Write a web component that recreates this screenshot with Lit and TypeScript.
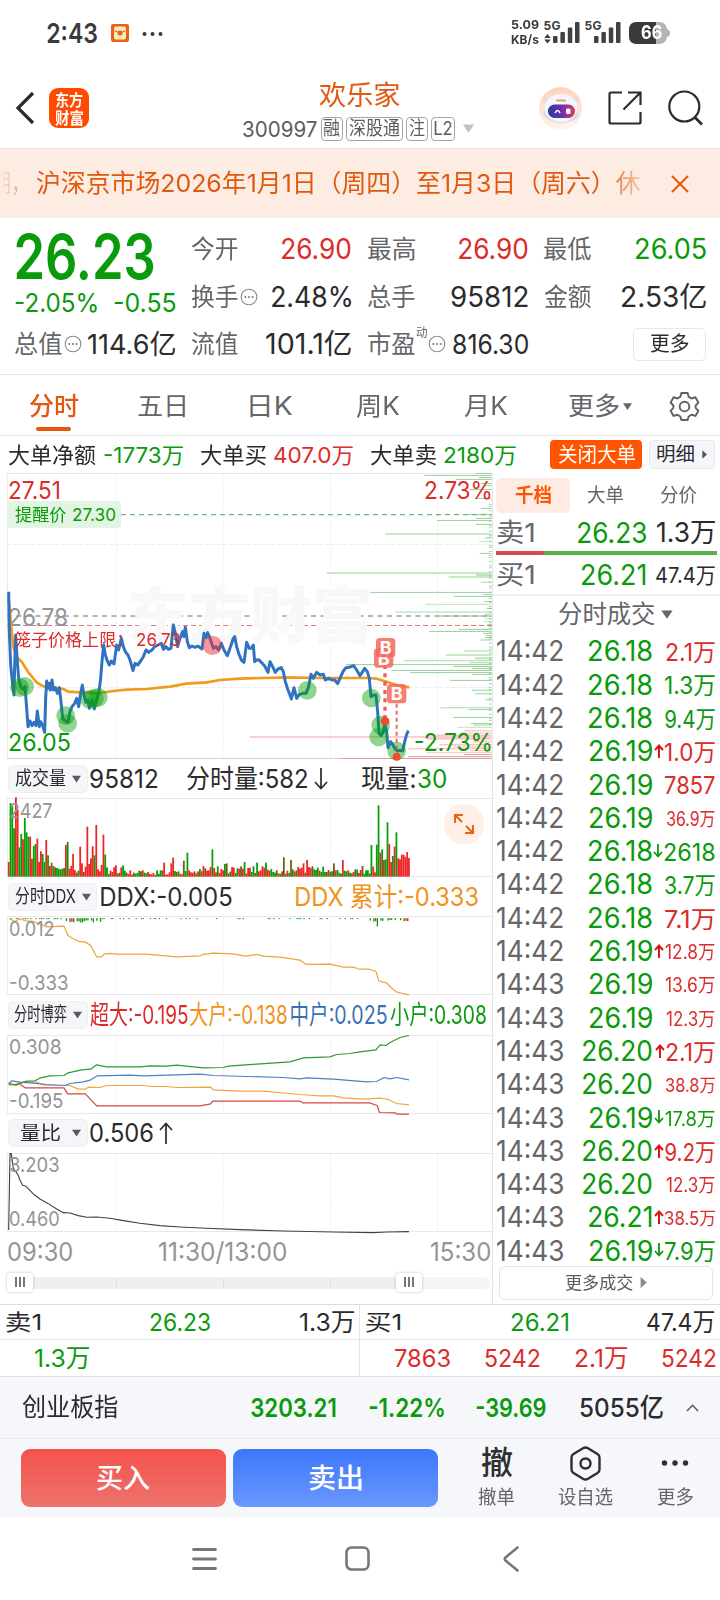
import { LitElement, html, svg, css, nothing } from "lit";
import { customElement, property } from "lit/decorators.js";

const FONT = css`"Inter", "Noto Sans CJK SC", sans-serif`;

/** A label whose glyphs are condensed or widened to span exactly `w` pixels. */
@customElement("fit-text")
class FitText extends LitElement {
  @property({ type: Number }) w = 0;
  @property() text = "";
  static styles = css`
    :host { display: block; flex: none; height: 1em; line-height: 1em; white-space: pre; }
    .t { display: inline-block; height: 1em; line-height: 1em; transform-origin: 0 50%; }
  `;
  render() {
    return html`<span class="t">${this.text}</span>`;
  }
  updated() {
    const el = this.renderRoot.querySelector(".t") as HTMLElement;
    const cs = getComputedStyle(el);
    const ctx = document.createElement("canvas").getContext("2d")!;
    ctx.font = `${cs.fontWeight} ${cs.fontSize} ${cs.fontFamily}`;
    const m = ctx.measureText(this.text);
    const ink = m.actualBoundingBoxLeft + m.actualBoundingBoxRight;
    const k = ink > 0 ? this.w / ink : 1;
    this.style.width = `${this.w}px`;
    el.style.transform = `translateX(${m.actualBoundingBoxLeft * k}px) scaleX(${k})`;
  }
}

const t = (text: string, w: number, cls = "") =>
  html`<fit-text class=${cls} .w=${w} .text=${text} style="width:${w}px"></fit-text>`;

const dots = html`<svg class="hint" viewBox="0 0 18 18"><circle cx="9" cy="9" r="7.8" fill="none" stroke="#8a8a8a" stroke-width="1.1"/><circle cx="5.4" cy="9" r="1" fill="#777"/><circle cx="9" cy="9" r="1" fill="#777"/><circle cx="12.6" cy="9" r="1" fill="#777"/></svg>`;
const down = html`<svg class="down" viewBox="0 0 10 8"><path d="M0 .5H10L5 7.8Z" fill="currentColor"/></svg>`;
const right = html`<svg class="right" viewBox="0 0 6 10"><path d="M.4 0V10L6 5Z" fill="currentColor"/></svg>`;

/* Coordinates in the plots below are in thirds of a pixel. */
const PRICE =
  "26,380 28,500 32,600 38,660 42,690 44,600 47,510 52,590 56,640 62,665 68,672 75,665 80,730 84,785 90,768 96,782 102,772 108,782 112,738 118,785 122,770 128,782 134,802 137,700 140,648 144,670 148,655 151,675 156,645 160,675 166,668 172,685 178,668 184,720 188,760 196,768 204,772 210,740 216,725 224,715 230,700 236,725 241,690 247,660 252,690 258,712 264,705 268,730 277,705 283,732 290,705 297,680 302,640 306,590 311,540 316,570 322,588 328,600 334,588 342,597 350,540 356,555 364,520 370,545 376,560 384,570 390,585 399,617 405,595 413,600 422,588 430,575 438,555 446,562 456,555 464,545 474,540 484,535 490,553 498,545 505,553 513,550 520,480 526,505 533,545 540,520 548,500 552,515 556,487 562,530 568,548 576,543 585,547 594,543 600,548 606,552 612,505 618,518 623,503 630,520 640,550 648,545 656,555 664,535 672,555 682,572 690,550 700,520 704,515 710,545 716,565 724,585 732,592 740,532 748,550 754,550 760,540 764,590 770,585 776,584 784,592 794,603 804,622 810,590 818,605 826,622 834,612 844,608 850,620 856,650 864,675 870,690 874,702 882,668 890,700 898,688 910,685 918,685 926,665 933,628 940,640 950,622 960,630 970,628 976,645 986,640 996,645 1004,645 1013,656 1022,635 1030,618 1038,608 1050,606 1061,602 1070,615 1080,632 1088,620 1094,610 1102,620 1108,640 1113,695 1122,690 1128,690 1133,740 1137,805 1144,812 1150,800 1154,775 1160,800 1164,848 1172,830 1178,838 1184,850 1192,858 1200,856 1208,858 1214,830 1220,808 1225,797";
const AVG =
  "26,400 32,470 40,545 50,575 66,592 85,622 110,652 130,664 160,668 190,672 205,680 240,682 300,684 340,678 380,674 440,672 510,665 560,656 620,652 660,645 720,641 860,637 960,639 1100,639 1130,641 1160,650 1190,660 1228,667";

const ASK: number[][] = [
  [25, 708], [31, 553], [38, 716], [43, 647], [55, 722], [62, 735], [74, 690], [100, 710], [130, 723], [148, 672],
  [160, 708], [166, 591], [178, 708], [207, 435, 5], [218, 735, 5], [230, 717, 3], [265, 719], [324, 261, 5],
  [330, 708, 6], [336, 626, 5], [352, 723, 4], [382, 390], [388, 730], [394, 642], [410, 733], [418, 555, 3], [430, 740],
  [441, 466, 4], [453, 592, 6], [448, 735, 4], [462, 733, 3], [470, 733, 3], [478, 742], [493, 657], [499, 567], [506, 730], [512, 738], [518, 735],
  [525, 722], [558, 673, 4], [570, 618, 5], [580, 705, 6], [587, 491, 4], [593, 688, 4], [599, 318], [604, 640],
  [610, 695], [616, 454], [623, 510], [628, 695], [646, 631], [676, 696, 5], [686, 705, 5], [704, 735, 5],
  [728, 601, 4], [734, 686], [757, 639], [775, 692], [780, 700], [787, 652, 3],
];
const BID: number[][] = [
  [797, 672, 4], [804, 660, 4], [811, 560, 5], [816, 29, 5], [821, 560, 6], [830, 700, 5], [839, 598, 5], [846, 640, 4],
  [851, 505, 4], [857, 690, 4], [863, 560, 3], [869, 672], [875, 505], [880, 302],
];
const rightBars = (list: number[][], thin: string, thick: string) =>
  list.map(([y, x, h]) => svg`<rect x=${x} y=${y - (h ?? 2.4) / 2} width=${755 - x} height=${h ?? 2.4} fill=${h ? thick : thin}/>`);
const ticks = Array.from({ length: 110 }, (_, i) => 118 + i * 6.1).filter((_, i) => (i * 7) % 5 < 3);

const HEAD =
  "r44 g221 g212 g145 r238 r200 g88 g128 r112 g176 g133 g120 r120 r54 g92 g98 r114 r44 r76 g68 g44 r110 g64 r32 r42 g32 g28 g26 g24 g22 g24 g26 r95 g104 r24 r32 r68 r20 g12 g18 r90 r40 g14 r30 r150 r38 r55 r91 g64 r155 r22 r16 r35 r126 g66 g28 g8 r18 r14 r28 r34 g10 g12 r28 g34 g18 g12".split(" ");
const PEAKS: Record<number, string> = {
  87: "r42", 91: "r40", 92: "r57", 98: "g48", 100: "g72", 109: "r32", 114: "g82", 121: "g38", 122: "g40", 132: "g44", 139: "g42", 144: "g42",
  154: "g58", 158: "g50", 165: "r40", 167: "r50", 176: "g30", 182: "g40", 187: "r50", 198: "g32", 203: "g95", 204: "r30", 206: "g96", 207: "g214",
  208: "r72", 209: "g82", 210: "r50", 211: "g52", 212: "g163", 213: "r98", 214: "r44", 215: "g62", 216: "r90", 217: "g133",
  218: "r55", 219: "r52", 220: "r66", 221: "r66", 222: "r60", 223: "r74", 224: "r56",
};
const volume = Array.from({ length: 225 }, (_, i) => {
  if (PEAKS[i]) return PEAKS[i];
  if (HEAD[i]) return HEAD[i];
  const n = (i * 37 + ((i * i) % 23) * 5) % 29;
  return (n % 2 ? "r" : "g") + Math.round((i > 105 ? 9 : 5) + n * (i > 105 && i < 175 ? 0.8 : 0.5));
});
const volumeBars = volume.map((b, i) => {
  const h = Number(b.slice(1));
  return svg`<rect x=${23.5 + i * 5.36} y=${365 - h} width="5.4" height=${h} fill=${b[0] === "r" ? "#ee2626" : i % 4 === 2 && h < 60 ? "#7a5a10" : "#08a008"}/>`;
});
const ddxBars = Array.from({ length: 224 }, (_, i) => {
  const x = 26 + i * 5.36;
  const n = (i * 31 + ((i * i) % 17)) % 11;
  if (n < 4 || (x > 320 && x < 1100 && n < 8)) return nothing;
  const h = x > 190 && x < 300 ? 3 + n : x > 1130 && x < 1140 ? 25 : x > 1100 ? 1 + n * 0.9 : 3;
  return svg`<rect x=${x} y="490" width="4" height=${h} fill=${n === 9 ? "#e02020" : "#149914"}/>`;
});

const grid = (h: number) => svg`
  <g stroke="#e9e9ec" stroke-width="1" fill="none">
    <path d="M7 .5H492M7 ${h - 0.5}H492M7.3 0V${h}"/>
    <path d="M116.2 1V${h}M223.3 1V${h}M330.5 1V${h}M437.6 1V${h}" stroke-dasharray="3 1.6" stroke="#f0f0f2"/>
  </g>`;
const line = (points: string, color: string, w = 3.6) =>
  svg`<polyline points=${points} fill="none" stroke=${color} stroke-width=${w} stroke-linejoin="round"/>`;

const TICKS: [string, string, string, number, string][] = [
  ["14:42", "26.18", "2.1万", 49, "r"], ["14:42", "26.18", "1.3万", 50, "g"], ["14:42", "26.18", "9.4万", 50, "g"],
  ["14:42", "26.19", "1.0万", 50, "r u"], ["14:42", "26.19", "7857", 50, "r"], ["14:42", "26.19", "36.9万", 48, "r s"],
  ["14:42", "26.18", "2618", 51, "g d"], ["14:42", "26.18", "3.7万", 50, "g"], ["14:42", "26.18", "7.1万", 50, "r"],
  ["14:42", "26.19", "12.8万", 50, "r s u"], ["14:43", "26.19", "13.6万", 50, "r s"], ["14:43", "26.19", "12.3万", 49, "r s"],
  ["14:43", "26.20", "2.1万", 49, "r u"], ["14:43", "26.20", "38.8万", 49, "r xs"], ["14:43", "26.19", "17.8万", 50, "g s d"],
  ["14:43", "26.20", "9.2万", 50, "r u"], ["14:43", "26.20", "12.3万", 49, "r s"], ["14:43", "26.21", "38.5万", 50, "r xs u"],
  ["14:43", "26.19", "7.9万", 50, "g d"],
];
const priceWidth: Record<string, number> = { "26.18": 62.5, "26.19": 62, "26.20": 69, "26.21": 63 };

@customElement("app-root")
class AppRoot extends LitElement {
  static styles = css`
    :host { display: block; width: 720px; height: 1600px; overflow: hidden; background: #fff; color: #2b2b2e; font-family: ${FONT}; }
    * { box-sizing: border-box; }
    svg { display: block; flex: none; }
    .r { color: #db2c2c; } .g { color: #0a9a0c; } .o { color: #f0921c; } .b { color: #3b6fb6; } .grey { color: #66666a; } .lite { color: #949497; }
    .row { display: flex; align-items: center; }
    .f12 { font-size: 12px; } .f17 { font-size: 17.5px; } .f19 { font-size: 19px; } .f20 { font-size: 20.5px; } .f22 { font-size: 22px; }
    .f24 { font-size: 24.5px; } .f26 { font-size: 26px; } .f27 { font-size: 27.5px; } .f28 { font-size: 28.5px; }
    .semi { font-weight: 600; } .med { font-weight: 500; }
    .end { margin-left: auto; }

    .status { height: 66px; align-items: flex-start; padding: 20px 50px 0 47px; color: #3a3a3c; }
    .clock { font-size: 27px; font-weight: 600; }
    .packet { margin: 4px 0 0 14px; }
    .more { margin: 11px 0 0 13px; }
    .speed { margin: -1px 0 0 auto; display: grid; gap: 3px; font-size: 12.3px; font-weight: 700; }
    .signal { margin: 1px 0 0 3px; overflow: visible; }
    .batt { margin-top: 1px; position: relative; color: #fff; }
    .batt .lvl { position: absolute; left: 12px; top: 2px; font-size: 19px; font-weight: 700; }

    .head { height: 83px; display: grid; grid-template-columns: 243px 296px 1fr; border-bottom: 1px solid #e4e5e8; }
    .brand { padding: 2px 0 0 15px; gap: 14px; }
    .logo { width: 40px; height: 40px; border-radius: 9px; background: #ff4a00; color: #fff; display: grid; place-content: center; gap: 2px; font-size: 16px; font-weight: 600; font-family: "Noto Sans CJK SC", sans-serif; }
    .title { color: #e4570f; margin: 15.500px 0 7.500px 76px; font-size: 27.5px; }
    .code { color: #5c5c60; gap: 4px; font-size: 22px; height: 24px; }
    .tag { border: 1px solid #a5a5a8; border-radius: 4px; height: 24px; padding: 0 2px; font-size: 19px; display: flex; align-items: center; }
    .tag + .tag { margin-left: -1px; }
    .code .down { width: 13px; height: 9px; color: #c3c3c6; margin-left: 3px; }
    .tools { padding-top: 2px; gap: 26px; }

    .banner { height: 69px; background: #fcece2; color: #e0590f; font-size: 24.5px; }
    .marquee { width: 648px; height: 69px; gap: 9px; overflow: hidden; -webkit-mask: linear-gradient(90deg, transparent, #000 40px, #000 600px, transparent 655px); mask: linear-gradient(90deg, transparent, #000 40px, #000 600px, transparent 655px); }
    .marquee .lead { margin-left: -8px; }
    .close { margin-left: 23px; }

    .quote { height: 157px; padding: 7.500px 14px 0 15px; display: grid; align-content: start; grid-template-columns: 176px 177px 176px 162px; border-bottom: 1px solid #e4e5e8; }
    .cell { height: 47.5px; padding-right: 16px; }
    .cell:nth-child(4n + 2) { padding-right: 17px; }
    .cell:nth-child(4n) { padding-right: 0; }
    .cell > :last-child:not(:first-child) { margin-left: auto; }
    .hint { width: 18px; height: 18px; margin-left: 2px; }
    .big { font-size: 61.5px; font-weight: 600; padding: 0 0 0 1px; align-items: flex-start; }
    .big > * { margin-top: 0; }
    .chg { padding: 13px 15px 0 0; }
    .sup { align-self: flex-start; margin: 6px -1px 0 1px; font-size: 12.5px; }
    .btn { width: 73px; height: 33px; border: 1px solid #e6e7ea; border-radius: 5px; display: grid; place-content: center; }

    .tabs { height: 61px; display: grid; grid-template-columns: 109px 112px 106px 108px 105px 100px 1fr; padding-left: 29px; color: #66666a; border-bottom: 1px solid #e4e5e8; font-size: 25px; }
    .tabs > * { height: 61px; display: flex; align-items: center; gap: 4px; padding-top: 1px; }
    .tabs .on { color: #e4570f; font-weight: 500; position: relative; }
    .tabs .on::after { content: ""; position: absolute; left: 7px; top: 51.5px; width: 35px; height: 4px; border-radius: 2px; background: #e4570f; }
    .tabs .down { width: 9px; height: 9px; }

    .sum { height: 37px; padding: 0 5px 0 8px; }
    .sum > .gap { margin-right: 17px; }
    .sum > .near { margin-right: 8px; }
    .chip { height: 29px; border-radius: 4px; display: flex; align-items: center; justify-content: center; gap: 8px; background: #ff5500; color: #fff; width: 92px; font-size: 20px; }
    .chip.plain { background: #f4f6fa; border: 1px solid #e6e8ec; color: #2b2b2e; width: 66px; margin-left: 7px; font-size: 19px; }
    .chip .right { width: 5px; height: 9px; color: #555; }

    .main { display: grid; grid-template-columns: 493px 227px; height: 832px; border-bottom: 1px solid #dcdde0; }
    .charts { border-right: 1px solid #e4e5e8; }
    .plot { position: relative; width: 492px; }
    .plot svg { width: 492px; overflow: visible; }
    .lab { position: absolute; left: 9px; }
    .p1 .hi { top: 5px; } .p1 .mid { top: 131.5px; } .p1 .lo { top: 257px; }
    .p1 .pct { left: 425px; } .p1 .pct.lo { left: 415px; }
    .remind { position: absolute; left: 7px; top: 28px; width: 114px; height: 27px; border-radius: 0 4px 4px 0; background: #e2f5e3; padding-left: 8px; gap: 7px; }
    .cage { position: absolute; left: 14px; top: 158px; gap: 15px; }
    .wm { position: absolute; left: 130px; top: 113px; font-size: 61px; font-weight: 900; color: #f8f8f9; }
    .price { position: absolute; left: 0; top: 0; }
    .sub .lab { left: 10px; } .sub .hi { top: 2.500px; } .sub .lo { top: 56.500px; }
    .bar { height: 39.25px; padding: 0 5px 0 8px; }
    .bar.first { height: 39px; }
    .pill { height: 28px; width: 80px; border-radius: 5px; background: #f5f6f9; border: 1px solid #eeeff2; display: flex; align-items: center; justify-content: center; gap: 6px; color: #2b2b2e; margin-right: 2px; }
    .pill.wide { width: 89px; margin-right: 4px; }
    .pill .down { width: 9px; height: 8px; color: #5a5a5c; }
    .pill.loose { gap: 12px; padding-left: 5px; }
    .expand { position: absolute; left: 444px; top: 6px; width: 40px; height: 40px; border-radius: 50%; background: #feefe7; display: grid; place-content: center; }
    .plot .expand svg { width: 20px; }
    .times { height: 40px; padding: 0 2px 0 8px; color: #949497; }
    .times .noon { margin-left: 87px; }
    .slider { position: relative; margin: 5px 2px 0 7px; height: 12px; border-radius: 6px; background: #f5f5f8; }
    .slider::before { content: ""; position: absolute; left: 0; top: 0; width: 402px; height: 12px; background: linear-gradient(#dcdcdf, #dcdcdf) 109px 2px / 1px 8px no-repeat, linear-gradient(#dcdcdf, #dcdcdf) 216px 2px / 1px 8px no-repeat, linear-gradient(#dcdcdf, #dcdcdf) 323px 2px / 1px 8px no-repeat, #efeff2; }
    .knob { position: absolute; top: -4px; left: 0; width: 26px; height: 19px; border-radius: 4px; background: #fff; box-shadow: 0 0 3px rgba(0, 0, 0, .25); display: flex; gap: 2.6px; align-items: center; justify-content: center; }
    .knob.right { left: 389px; }
    .knob i { width: 1.8px; height: 10px; background: #77777a; }

    .book { padding-left: 3px; }
    .segs { height: 40px; padding: 4px 0 0 0; }
    .segs .sel { width: 74px; height: 35px; background: #feece4; border-radius: 5px; color: #ff5500; display: grid; place-content: center; margin-right: 17px; font-weight: 700; }
    .segs .nx { margin-right: 36px; }
    .lvl1 { height: 38px; padding: 2px 5px 0 1px; }
    .lvl1 > :nth-child(2) { margin-left: auto; }
    .lvl1 .q { width: 69px; display: flex; justify-content: flex-end; }
    .ratio { width: 221px; height: 4px; background: linear-gradient(115deg, #d8494b 44px, #5cb04c 44.5px); }
    .lvl1.buy { height: 39px; padding-top: 1px; }
    .dealhd { margin-left: -3px; border-top: 2px solid #eeeff1; height: 41px; padding: 0 0 3px 66px; gap: 6px; }
    .dealhd .down { width: 12px; height: 9px; }
    .deal { height: 33.3px; padding: 0 5px 0 1px; display: grid; grid-template-columns: 66px 88.5px 64.5px; align-items: center; font-size: 28.5px; }
    .deal > :nth-child(2) { justify-self: end; }
    .vol { display: flex; align-items: center; justify-content: flex-end; gap: 1px; padding-top: 3px; font-size: 24px; padding-right: 1px; }
    .vol.s { font-size: 19.5px; } .vol.xs { font-size: 18px; }
    .vol .arr { width: 10px; height: 14px; margin-top: -4px; }
    .morebtn { width: 214px; height: 34px; margin: -2px 0 0 3px; border: 1px solid #e3e4e7; border-radius: 6px; display: flex; align-items: center; justify-content: center; gap: 7px; color: #5c5c60; }
    .morebtn .right { width: 7px; height: 11px; color: #8a8a8c; }

    .depth { display: grid; grid-template-columns: 360px 360px; height: 72px; border-bottom: 1px solid #dfe0e3; }
    .depth > div:first-child { border-right: 1px solid #e4e5e8; }
    .d1 { height: 35px; border-bottom: 1px solid #e8e9ec; padding: 0 6px; justify-content: space-between; }
    .d1.sell { padding: 0 5px 0 6px; }
    .d1.sell > :nth-child(2) { margin-left: 20px; }
    .d1.buy2 > :nth-child(2) { margin-left: 31px; }
    .d2 { height: 36px; padding: 0 4px 0 35px; justify-content: space-between; }
    .index { height: 62px; background: #f6f7fa; border-bottom: 1px solid #e9eaed; padding: 0 21px 0 22px; }
    .index .i1 { margin-left: 133px; } .index .i2 { margin-left: 33px; } .index .i3 { margin-left: 32px; } .index .i4 { margin-left: 34px; } .index .i5 { margin-left: auto; }
    .acts { height: 78px; background: #f6f7fa; padding: 0 21px; }
    .trade { width: 205px; height: 58px; border-radius: 9px; display: grid; place-content: center; color: #fff; font-size: 27px; font-weight: 500; background: linear-gradient(#f4524c, #ee726c); margin-right: 7px; }
    .trade.sell { width: 205px; background: linear-gradient(#3d77fb, #6a97ff); margin-right: 40px; }
    .act { display: flex; flex-direction: column; align-items: center; height: 64px; margin-bottom: 6px; justify-content: space-between; font-size: 19px; color: #66666a; }
    .act .ic { height: 40px; display: grid; place-content: center; color: #2f2f32; }
    .act .che { font-size: 32px; font-weight: 500; }
    .act.m { margin-left: 43px; } .act.l { margin-left: auto; margin-right: 6px; }
    .nav { height: 83px; }
    .nav .n1 { margin-left: 192px; } .nav .n2 { margin-left: 128px; } .nav .n3 { margin-left: 133px; }
  `;

  statusBar() {
    const bars = (x: number) => svg`<g fill="#414143"><rect x=${x} y="15" width="4.5" height="7" rx="1"/><rect x=${x + 7.4} y="11" width="4.5" height="11" rx="1"/><rect x=${x + 14.8} y="6.5" width="4.5" height="15.500" rx="1"/><rect x=${x + 22} y="1" width="4.5" height="21" rx="1"/></g>`;
    return html`<div class="row status">
      ${t("2:43", 50, "clock")}
      <svg class="packet" width="18" height="18" viewBox="0 0 18 18"><rect width="18" height="18" rx="2" fill="#e8601c"/><rect x="3" y="2.500" width="12" height="13" rx="2" fill="#ffe9b8"/><path d="M3.500 7Q9 10 14.500 7" stroke="#e8601c" fill="none"/><circle cx="9" cy="9" r="2.500" fill="#e8601c"/></svg>
      <svg class="more" width="21" height="6" viewBox="0 0 21 6" fill="#3a3a3c"><circle cx="2.500" cy="3" r="2"/><circle cx="10.500" cy="3" r="2"/><circle cx="18.500" cy="3" r="2"/></svg>
      <div class="speed">${t("5.09", 28)}${t("KB/s", 28)}</div>
      <svg class="signal" width="87" height="24" viewBox="0 0 87 24">
        <text x="1.500" y="8.800" font-size="12" font-weight="700" textLength="17" fill="#3a3a3c">5G</text>
        <text x="42.500" y="8.800" font-size="12" font-weight="700" textLength="17" fill="#3a3a3c">5G</text>
        <path d="M5.500 13L8.800 17H2.200ZM5.500 22.500L8.800 18.500H2.200Z" fill="#414143"/>${bars(11)}${bars(52)}</svg>
      <div class="batt"><svg width="41" height="24" viewBox="0 0 41 24"><path d="M8 1H30Q37 1 38 8Q41 9 41 12Q41 15 38 16Q37 23 30 23H8Q0 23 0 15V9Q0 1 8 1Z" fill="#b4b4b4"/><path d="M8 1H27V23H8Q0 23 0 15V9Q0 1 8 1Z" fill="#3a3a3c"/></svg>${t("66", 21, "lvl")}</div>
    </div>`;
  }

  header() {
    return html`<div class="head">
      <div class="row brand">
        <svg width="20" height="34" viewBox="0 0 20 34"><path d="M18 2L3 17L18 32" fill="none" stroke="#2b2b2e" stroke-width="3.200"/></svg>
        <div class="logo">${t("东方", 28)}${t("财富", 28)}</div>
      </div>
      <div>
        ${t("欢乐家", 81, "title")}
        <div class="row code">${t("300997", 74)}
          <span class="tag">${t("融", 16)}</span><span class="tag">${t("深股通", 51)}</span><span class="tag">${t("注", 16)}</span><span class="tag">${t("L2", 18)}</span>${down}</div>
      </div>
      <div class="row tools">
        <svg width="43" height="43" viewBox="0 0 43 43"><defs><linearGradient id="halo" x2="0" y2="1"><stop stop-color="#ffd2b8"/><stop offset="1" stop-color="#fff5ef"/></linearGradient><linearGradient id="visor"><stop stop-color="#2f3a9a"/><stop offset=".5" stop-color="#6a2fb0"/><stop offset="1" stop-color="#e0405a"/></linearGradient></defs>
          <circle cx="21.500" cy="21.500" r="21.500" fill="url(#halo)"/><path d="M5 9L12 13L32 13L38 9L38 20L40 28L37 32Q22 40 8 32L4 28L6 20Z" fill="#d9dde8"/><ellipse cx="22" cy="21" rx="16.500" ry="14" fill="#f5f6fb"/><rect x="17" y="12.500" width="10" height="2" rx="1" fill="#e0a070"/><rect x="9" y="17.500" width="27" height="13.500" rx="6.500" fill="url(#visor)"/><path d="M16 26Q18.500 21 21 26" stroke="#fff" stroke-width="1.600" fill="none"/><rect x="27" y="21.500" width="4.500" height="5.500" rx="1.500" fill="#fff"/></svg>
        <svg width="34" height="34" viewBox="0 0 34 34"><path d="M14 1.500H3Q1.500 1.500 1.500 3V31Q1.500 32.500 3 32.500H31Q32.500 32.500 32.500 31V21M20 1.500H32.500V14M32 2L15.500 18.500" fill="none" stroke="#2b2b2e" stroke-width="2.200"/></svg>
        <svg width="35" height="36" viewBox="0 0 35 36"><circle cx="16.300" cy="16.500" r="15" fill="none" stroke="#2b2b2e" stroke-width="2.200"/><path d="M26.500 27L34 34.500" stroke="#2b2b2e" stroke-width="2.600"/></svg>
      </div>
    </div>`;
  }

  quote() {
    const L = (s: string) => t(s, 47, "grey f24");
    return html`<div class="quote">
      <div class="row cell big">${t("26.23", 138, "g")}</div>
      <div class="row cell">${L("今开")}${t("26.90", 69, "r f28")}</div>
      <div class="row cell">${L("最高")}${t("26.90", 69, "r f28")}</div>
      <div class="row cell">${L("最低")}${t("26.05", 70, "g f28")}</div>
      <div class="row cell chg">${t("-2.05%", 82, "g f26")}${t("-0.55", 62, "g f26")}</div>
      <div class="row cell">${L("换手")}${dots}${t("2.48%", 79, "f28")}</div>
      <div class="row cell">${L("总手")}${t("95812", 77, "f28")}</div>
      <div class="row cell">${L("金额")}${t("2.53亿", 84, "f28")}</div>
      <div class="row cell">${L("总值")}${dots}${t("114.6亿", 87, "f27")}</div>
      <div class="row cell">${L("流值")}${t("101.1亿", 85, "f28")}</div>
      <div class="row cell">${L("市盈")}${t("动", 11, "sup grey")}${dots}${t("816.30", 75, "f27")}</div>
      <div class="row cell"><span></span><div class="btn">${t("更多", 39, "f20")}</div></div>
    </div>`;
  }

  priceChart() {
    const badge = (x: number, y: number) => svg`<g transform="translate(${x} ${y})"><rect x="-29" y="-29" width="58" height="58" rx="11" fill="#f5685a" opacity=".85"/><text x="0" y="20" font-size="54" font-weight="700" text-anchor="middle" fill="#fff">B</text></g>`;
    return html`<div class="plot p1">
      ${t("东方财富", 240, "wm")}
      <svg height="286" viewBox="0 0 492 286">
        ${grid(286)}
        <path d="M7 71.500H492M7 214.500H492" stroke="#ececef" stroke-dasharray="4 2"/>
        <path d="M7 285.500H492" stroke="#d2d2d5"/>
        <g transform="translate(240 -8) scale(.33333)">
          ${rightBars(ASK, "#84c586", "#bce5bc")}${rightBars(BID, "#df8a8c", "#fbc6c8")}
          ${ticks.map((y) => svg`<rect x="747" y=${y} width="8" height="2.500" fill="#8cc98e"/>`)}
        </g>
        <path d="M121 41.700H492" stroke="#6fb573" stroke-width="1.200" stroke-dasharray="5 4"/>
        <path d="M7 143H492" stroke="#b4b4b6" stroke-width="1.800" stroke-dasharray="5 4.500"/>
        <path d="M7 152.500H492" stroke="#e07a7c" stroke-width="1.100" stroke-dasharray="5 3"/>
      </svg>
      ${t("26.78", 58, "lab mid lite f24")}
      <svg class="price" height="286" viewBox="0 0 492 286"><g transform="translate(0 -8) scale(.33333)">
        ${line(AVG, "#f29a1e", 8)}${line(PRICE, "#3173c0", 9)}
        <g fill="#06a006">${[[59, 668], [74, 664], [197, 752], [203, 775], [269, 703], [283, 700], [295, 697], [922, 676], [1114, 699], [1142, 780], [1136, 816], [1190, 858]].map(([x, y]) => svg`<circle cx=${x} cy=${y} r="28" opacity=".45"/>`)}</g>
        <circle cx="637" cy="541" r="29" fill="#ee3038" opacity=".5"/>
        <path d="M1155 600V760" stroke="#e8443a" stroke-width="10" stroke-dasharray="12 13" opacity=".85"/>
        <path d="M1190 716V865" stroke="#e8443a" stroke-width="6" stroke-dasharray="12 9" opacity=".8"/>
        ${badge(1151, 579)}${badge(1157, 548)}${badge(1190, 686)}
        <circle cx="1155" cy="768" r="13" fill="#f04a30"/><circle cx="1190" cy="875" r="12" fill="#f04a30"/>
      </g></svg>
      ${t("27.51", 50, "lab hi r f24")}
      ${t("2.73%", 66, "lab hi pct r f24")}
      <div class="row remind">${t("提醒价", 51, "g f17")}${t("27.30", 42, "g f17")}</div>
      <div class="row cage">${t("笼子价格上限：", 108, "r f17")}${t("26.73", 43, "r f17")}</div>
      ${t("26.05", 61, "lab lo g f24")}
      ${t("-2.73%", 76, "lab lo pct g f24")}
    </div>`;
  }

  sub(hi: unknown, lo: unknown, body: unknown, y0: number, extra: unknown = nothing) {
    return html`<div class="plot sub"><svg height="79" viewBox="0 0 492 79">${grid(79)}<g transform="translate(0 ${-y0}) scale(.33333)">${body}</g></svg>${hi}${lo}${extra}</div>`;
  }

  render() {
    const pill = (s: string, w: number, cls = "") => html`<span class="pill ${cls}">${t(s, w, "f19")}${down}</span>`;
    const arrow = (c: string) => c.includes("u")
      ? html`<svg class="arr" viewBox="0 0 10 14"><path d="M5 14V2M1 6L5 1.500L9 6" fill="none" stroke="#dc1414" stroke-width="2"/></svg>`
      : c.includes("d") ? html`<svg class="arr" viewBox="0 0 10 14"><path d="M5 0V12M1 8L5 12.500L9 8" fill="none" stroke="#0a9a0c" stroke-width="1.800"/></svg>` : nothing;
    const thinArrow = (d: string) => html`<svg width="14" height="22" viewBox="0 0 14 22"><path d=${d} fill="none" stroke="#2b2b2e" stroke-width="1.700"/></svg>`;
    return html`
      ${this.statusBar()}
      ${this.header()}
      <div class="row banner">
        <div class="row marquee">${t("期，", 26, "lead")}<span></span>${t("沪深京市场2026年1月1日（周四）至1月3日（周六）休", 604)}${t("市", 23)}</div>
        <svg class="close" width="18" height="18" viewBox="0 0 18 18"><path d="M1 1L17 17M17 1L1 17" stroke="#e0590f" stroke-width="2"/></svg>
      </div>
      ${this.quote()}
      <div class="tabs">
        <div class="on">${t("分时", 50)}</div><div>${t("五日", 47)}</div><div>${t("日K", 43)}</div><div>${t("周K", 44)}</div><div>${t("月K", 44)}</div>
        <div>${t("更多", 50)}${down}</div>
        <div><svg width="31" height="31" viewBox="0 0 32 32" fill="none" stroke="#606064" stroke-width="2"><circle cx="16" cy="16" r="5"/><path d="M12.800 2H19.200L20.300 6L23.300 7.700L27.300 6.500L30.300 12L27.500 15V17.500L30.300 20.500L27.300 25.700L23.300 24.500L20.300 26.300L19.200 30H12.800L11.700 26.300L8.700 24.500L4.700 25.700L1.700 20.500L4.500 17.500V15L1.700 12L4.700 6.500L8.700 7.700L11.700 6Z" stroke-linejoin="round"/></svg></div>
      </div>
      <div class="row sum">
        ${t("大单净额", 88, "f22 near")}${t("-1773万", 79, "g f22 gap")}${t("大单买", 66, "f22 near")}${t("407.0万", 79, "r f22 gap")}${t("大单卖", 66, "f22 near")}${t("2180万", 72, "g f22")}
        <span class="end chip">${t("关闭大单", 77)}</span><span class="chip plain">${t("明细", 37)}${right}</span>
      </div>
      <div class="main">
        <div class="charts">
          ${this.priceChart()}
          <div class="row bar first">${pill("成交量", 51)}${t("95812", 67, "f26")}<span style="width:30px"></span>${t("分时量:582", 120, "f26")}<span style="width:7px"></span>${thinArrow("M7 0V20M1 14L7 20.500L13 14")}<span style="width:34px"></span>${t("现量:", 53, "f26")}<span style="width:3px"></span>${t("30", 28, "f26 g")}</div>
          ${this.sub(t("2427", 42, "lab hi lite f20"), nothing, volumeBars, 43, html`<div class="expand"><svg width="20" height="20" viewBox="0 0 20 20"><path d="M1 9V1H9M1 1L8 8M19 11V19H11M19 19L12 12" fill="none" stroke="#e8651c" stroke-width="2"/></svg></div>`)}
          <div class="row bar">${pill("分时DDX", 61, "wide")}${t("DDX:-0.005", 131, "f26")}<span class="end"></span>${t("DDX 累计:-0.333", 182, "f26 o")}<span style="width:9px"></span></div>
          ${this.sub(t("0.012", 44, "lab hi lite f20"), t("-0.333", 58, "lab lo lite f20"), svg`${ddxBars}${line("28,492 45,500 60,492 75,498 100,500 120,508 140,516 192,514 204,542 220,552 236,560 256,562 272,572 290,606 305,606 312,598 330,596 350,598 440,598 470,601 530,606 600,603 610,599 640,595 700,597 735,604 770,599 790,604 840,607 900,616 918,628 935,629 990,628 1030,637 1060,637 1075,642 1110,644 1128,650 1136,678 1160,685 1170,695 1190,712 1210,716 1227,720", "#eda338")}`, 161.2)}
          <div class="row bar">${pill("分时博弈", 53)}${t("超大:-0.195", 98, "f26 r")}<span style="width:2px"></span>${t("大户:-0.138", 97, "f26 o")}<span style="width:4px"></span>${t("中户:0.025", 96, "f26 b")}<span style="width:3px"></span>${t("小户:0.308", 96, "f26 g")}</div>
          ${this.sub(t("0.308", 51, "lab hi lite f20"), t("-0.195", 53, "lab lo lite f20"), svg`
            ${line("26,268 60,266 75,277 192,277 203,295 256,295 290,331 600,331 632,325 638,317 900,317 908,322 1108,322 1132,330 1138,351 1186,352 1192,356 1227,356", "#d84646")}
            ${line("26,264 50,270 75,258 110,260 130,268 180,270 210,270 235,281 256,281 265,275 300,276 320,270 430,270 460,273 500,273 530,276 632,275 640,283 720,287 790,287 900,297 960,301 1000,301 1030,307 1090,311 1140,308 1165,312 1190,324 1227,328", "#efa640")}
            ${line("26,264 36,256 60,260 90,262 140,267 195,270 210,264 250,259 270,254 292,241 390,239 430,241 600,236 640,240 740,243 850,246 900,250 920,247 1000,251 1100,259 1130,258 1152,246 1170,250 1190,246 1227,253", "#4b82c8")}
            ${line("26,264 45,268 80,257 105,256 122,247 150,241 192,240 204,232 245,223 272,221 290,208 320,214 420,214 450,211 500,212 530,209 610,217 670,216 685,212 770,206 870,199 910,187 990,184 1010,177 1050,174 1080,169 1128,163 1140,148 1158,150 1172,140 1200,126 1227,120", "#2f9a33")}`, 39.5)}
          <div class="row bar">${pill("量比", 40, "loose")}${t("0.506", 63, "f26")}<span style="width:6px"></span>${thinArrow("M7 22V2M1 8L7 1.500L13 8")}</div>
          ${this.sub(t("3.203", 49, "lab hi lite f20"), t("0.460", 49, "lab lo lite f20"), line("26,704 30,475 34,475 40,520 48,530 54,538 60,555 68,570 78,573 100,596 120,611 145,625 170,641 190,652 210,653 235,661 260,666 290,665 330,669 370,676 420,684 480,691 540,695 620,699 720,703 850,707 1000,710 1120,712 1160,710 1227,709", "#444", 3.4), 157.7)}
          <div class="row times">${t("09:30", 64, "f26")}${t("11:30/13:00", 127, "f26 noon")}${t("15:30", 59, "f26 end")}</div>
          <div class="slider"><span class="knob"><i></i><i></i><i></i></span><span class="knob right"><i></i><i></i><i></i></span></div>
        </div>
        <div class="book">
          <div class="row segs"><span class="sel">${t("千档", 37, "f19")}</span>${t("大单", 37, "f19 grey nx")}${t("分价", 37, "f19 grey")}</div>
          <div class="row lvl1">${t("卖1", 37, "f26 grey")}${t("26.23", 68, "f28 g")}<span class="q">${t("1.3万", 58, "f27")}</span></div>
          <div class="ratio"></div>
          <div class="row lvl1 buy">${t("买1", 37, "f26 grey")}${t("26.21", 64, "f28 g")}<span class="q">${t("47.4万", 59, "f22")}</span></div>
          <div class="row dealhd grey">${t("分时成交", 96, "f24")}${down}</div>
          ${TICKS.map(([time, p, v, w, c]) => html`<div class="deal">${t(time, 66, "grey")}${t(p, priceWidth[p], "g")}<span class="vol ${c}">${arrow(c)}${t(v, w)}</span></div>`)}
          <div class="morebtn">${t("更多成交", 68, "f17")}${right}</div>
        </div>
      </div>
      <div class="depth">
        <div><div class="row d1 sell">${t("卖1", 34, "f22")}${t("26.23", 60, "g f24")}${t("1.3万", 54, "f24")}</div><div class="row d2">${t("1.3万", 54, "g f24")}</div></div>
        <div><div class="row d1 buy2">${t("买1", 34, "f22")}${t("26.21", 57, "g f24")}${t("47.4万", 67, "f24")}</div><div class="row d2 r">${t("7863", 55, "f24")}${t("5242", 55, "f24")}${t("2.1万", 52, "f24")}${t("5242", 54, "f24")}</div></div>
      </div>
      <div class="row index">${t("创业板指", 96, "f24")}${t("3203.21", 85, "g f26 semi i1")}${t("-1.22%", 75, "g f26 semi i2")}${t("-39.69", 70, "g f26 semi i3")}${t("5055亿", 83, "f26 med i4")}
        <svg class="i5" width="13" height="8" viewBox="0 0 13 8"><path d="M1 7L6.500 1.200L12 7" fill="none" stroke="#555" stroke-width="1.400"/></svg></div>
      <div class="row acts">
        <div class="trade">${t("买入", 53)}</div><div class="trade sell">${t("卖出", 53)}</div>
        <div class="act"><div class="ic">${t("撤", 31, "che")}</div>${t("撤单", 37)}</div>
        <div class="act m"><div class="ic"><svg width="31" height="35" viewBox="0 0 31 35" fill="none" stroke="#2f2f32" stroke-width="2.400"><path d="M13 2.200Q15.500 .8 18 2.200L27.500 8Q29.500 9.300 29.500 11.500V23.500Q29.500 25.700 27.500 27L18 32.800Q15.500 34.200 13 32.800L3.500 27Q1.500 25.700 1.500 23.500V11.500Q1.500 9.300 3.500 8Z"/><circle cx="15.500" cy="17.500" r="5"/></svg></div>${t("设自选", 55)}</div>
        <div class="act l"><div class="ic"><svg width="28" height="6" viewBox="0 0 28 6" fill="#2f2f32"><circle cx="3.500" cy="3" r="2.700"/><circle cx="14" cy="3" r="2.700"/><circle cx="24.500" cy="3" r="2.700"/></svg></div>${t("更多", 36)}</div>
      </div>
      <div class="row nav">
        <svg class="n1" width="25" height="24" viewBox="0 0 25 24"><path d="M1.500 2.500H23.500M1.500 12H23.500M1.500 21.500H23.500" stroke="#77777a" stroke-width="2.800" stroke-linecap="round"/></svg>
        <svg class="n2" width="25" height="25" viewBox="0 0 25 25"><rect x="1.500" y="1.500" width="22" height="22" rx="5" fill="none" stroke="#77777a" stroke-width="2.600"/></svg>
        <svg class="n3" width="16" height="26" viewBox="0 0 16 26"><path d="M14.500 1.500L2.500 11.500Q1 13 2.500 14.500L14.500 24.500" fill="none" stroke="#77777a" stroke-width="2.600" stroke-linecap="round"/></svg>
      </div>`;
  }
}
